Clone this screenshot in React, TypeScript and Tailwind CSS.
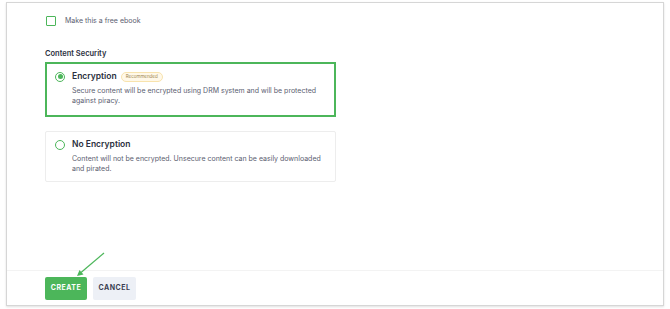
import { useState } from "react";

type Option = {
  id: string;
  title: string;
  description: string;
  badge?: string;
};

const OPTIONS: Option[] = [
  {
    id: "encryption",
    title: "Encryption",
    badge: "Recommended",
    description:
      "Secure content will be encrypted using DRM system and will be protected against piracy.",
  },
  {
    id: "none",
    title: "No Encryption",
    description:
      "Content will not be encrypted. Unsecure content can be easily downloaded and pirated.",
  },
];

function Radio({ checked }: { checked: boolean }) {
  return (
    <span className="flex h-[10px] w-[10px] shrink-0 items-center justify-center rounded-full border-[1.5px] border-[#4cb65a]">
      {checked && <span className="h-[5px] w-[5px] rounded-full bg-[#4cb65a]" />}
    </span>
  );
}

export default function App() {
  const [free, setFree] = useState(false);
  const [security, setSecurity] = useState("encryption");

  return (
    <div className="h-[309px] w-[670px] bg-white pb-[3px] pl-[6px] pr-[6px] pt-[2px] font-['Inter','Noto_Sans',sans-serif] text-[#3b3f4a]">
      <div className="flex h-full flex-col border border-[#d6d6d6] shadow-[0_1px_2px_rgba(0,0,0,0.12)]">
        <div className="flex-1 pl-[38px] pr-[327px] pt-[13px]">
          <label className="flex items-center gap-[9px] pl-[1px]">
            <button
              type="button"
              onClick={() => setFree(!free)}
              className="h-[10px] w-[10px] rounded-[1px] border-[1.5px] border-[#4cb65a]"
            />
            <span className="text-[7px] text-[#5b6070]">Make this a free ebook</span>
          </label>

          <div className="mt-[22px] text-[7.5px] font-semibold leading-[10px] text-[#2b3040]">
            Content Security
          </div>

          <div className="mt-[3px] flex flex-col gap-[14px]">
            {OPTIONS.map((o) => {
              const active = security === o.id;
              return (
                <div
                  key={o.id}
                  onClick={() => setSecurity(o.id)}
                  className={
                    active
                      ? "border-2 border-[#4cb65a] pb-[8px] pl-[8px] pr-[8px] pt-[8px]"
                      : "rounded-[2px] border border-[#ededed] pb-[6px] pl-[9px] pr-[9px] pt-[8px]"
                  }
                >
                  <div className="flex h-[10px] items-center gap-[7px]">
                    <Radio checked={active} />
                    <span className="text-[8.5px] font-semibold text-[#2b3040]">{o.title}</span>
                    {o.badge && (
                      <span className="-ml-[3px] rounded-full border border-[#f8e3ad] bg-[#fff8e8] px-[4px] py-[1px] text-[4.5px] leading-[6px] text-[#a08650]">
                        {o.badge}
                      </span>
                    )}
                  </div>
                  <p className="mt-[4px] pl-[17px] text-[7px] leading-[10.5px] text-[#5b6070]">
                    {o.description}
                  </p>
                </div>
              );
            })}
          </div>
        </div>

        <div className="relative flex h-[35px] gap-[6px] border-t border-[#f3f3f3] pl-[38px] pt-[6px]">
          <svg
            className="absolute left-[60px] top-[-20px]"
            width="40"
            height="30"
            viewBox="0 0 40 30"
            fill="none"
          >
            <path d="M37 2 L14 21.5" stroke="#4cb65a" strokeWidth="1.2" />
            <path d="M10 25 L12.5 19 L16.5 23.5 Z" fill="#4cb65a" />
          </svg>
          <button className="h-[23px] w-[42px] rounded-[2px] bg-[#4cb65a] text-[7px] font-bold tracking-[0.5px] text-white">
            CREATE
          </button>
          <button className="h-[23px] w-[43px] rounded-[2px] bg-[#edf0f6] text-[7px] font-bold tracking-[0.5px] text-[#3a3f52]">
            CANCEL
          </button>
        </div>
      </div>
    </div>
  );
}
